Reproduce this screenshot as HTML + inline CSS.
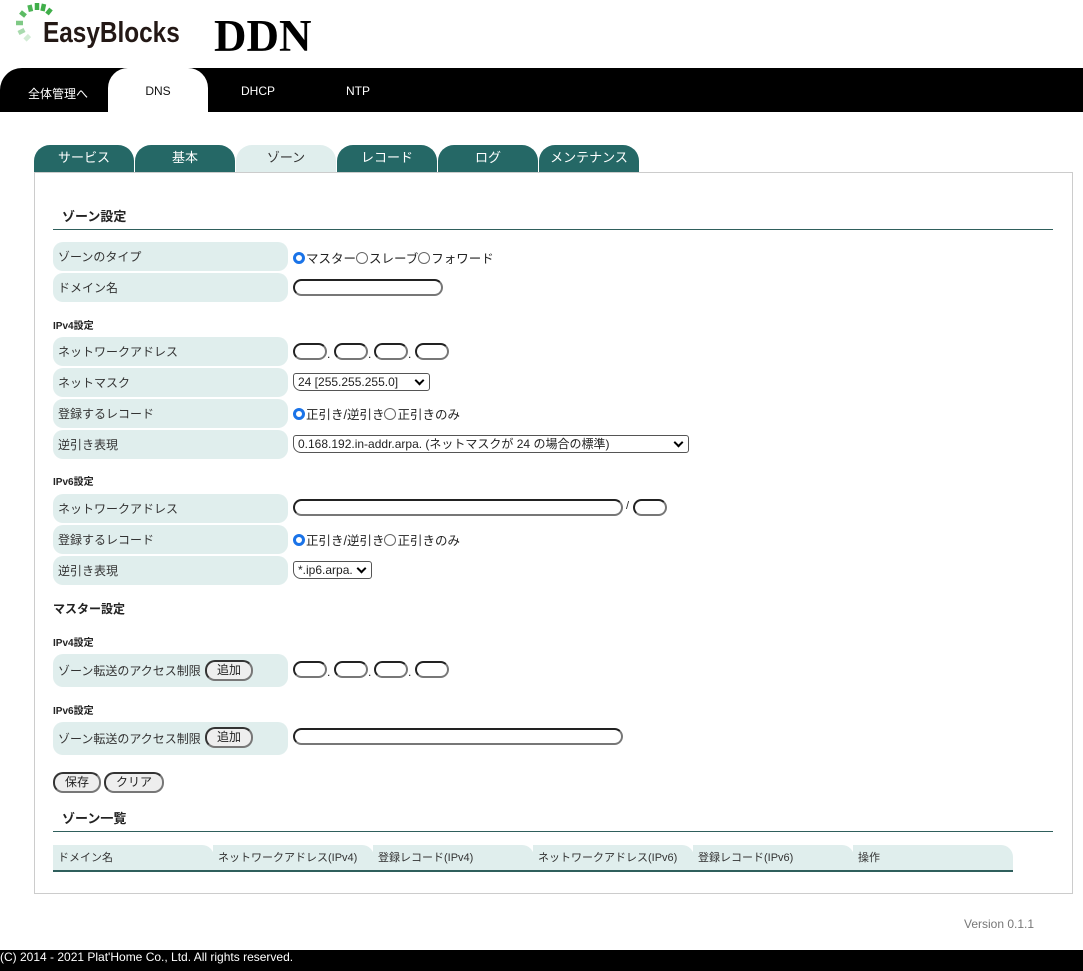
<!DOCTYPE html>
<html><head><meta charset="utf-8">
<style>
*{box-sizing:border-box;margin:0;padding:0}
body{width:1083px;height:971px;position:relative;background:#fff;font-family:"Liberation Sans","Noto Sans CJK JP",sans-serif;color:#222;overflow:hidden}
.a{position:absolute;white-space:nowrap}
.nav{position:absolute;left:0;top:68px;width:1083px;height:44px;background:#000}
.nt{position:absolute;top:84px;font-size:12px;color:#fff;text-align:center;width:100px}
.st{position:absolute;top:145px;width:100px;height:27px;background:#256866;border-radius:16px 16px 0 0;color:#fff;font-size:13px;text-align:center;line-height:25px}
.st.on{background:#e0eeed;color:#333}
.box{position:absolute;left:34px;top:172px;width:1039px;height:722px;border:1px solid #ccc}
.h{font-size:13px;font-weight:bold;color:#222}
.line{position:absolute;left:53px;width:1000px;height:1px;background:#2f5f5c}
.lb{position:absolute;left:53px;width:235px;background:#e0eeed;border-radius:10px;font-size:12px;color:#333;padding-left:5px;display:flex;align-items:center}
.sm{font-size:10px;font-weight:bold}
.in{position:absolute;height:17px;border:2px solid #222;border-right-color:#777;border-bottom-color:#777;border-radius:9px;background:#fff}
.sel{position:absolute;height:18px;border:1px solid #555;border-radius:3px 3px 3px 8px;font-size:12px;line-height:16px;padding-left:4px;background:#fff}
.sel:after{content:"";position:absolute;right:6px;top:3px;width:5px;height:5px;border-right:2px solid #000;border-bottom:2px solid #000;transform:rotate(45deg)}
.r{font-size:12.5px;color:#222;display:flex;align-items:center}
.rd{display:inline-block;width:12px;height:12px;border-radius:50%;border:1px solid #666;margin-right:1px}
.rd.on{border:3.5px solid #1a73e8;background:#fff}
.btn{position:absolute;height:21px;border:2px solid #333;border-right-color:#777;border-bottom-color:#777;border-radius:10px;background:#eee;font-size:12px;text-align:center;line-height:17px}
.th{position:absolute;top:845px;height:26px;width:161px;background:#e0eeed;border-radius:0 12px 0 0;font-size:11px;color:#333;line-height:26px;padding-left:5px}
.dot{position:absolute;font-size:12px}
</style></head><body>
<svg class="a" style="left:0;top:0" width="60" height="50" viewBox="0 0 60 50">
<g stroke-width="4.5" stroke-linecap="butt">
<line x1="37" y1="3" x2="37" y2="10" stroke="#3fae49"/>
<line x1="44" y1="4" x2="42.5" y2="11" stroke="#3fae49"/>
<line x1="51" y1="9" x2="47" y2="14" stroke="#3fae49"/>
<line x1="29.5" y1="5" x2="31" y2="11.5" stroke="#4cb556"/>
<line x1="20.5" y1="12" x2="25.5" y2="16" stroke="#5cbb64"/>
<line x1="16" y1="23" x2="23" y2="23" stroke="#7fc985"/>
<line x1="18.5" y1="33" x2="24.5" y2="30" stroke="#a9daae"/>
<line x1="25" y1="40" x2="29.5" y2="35.5" stroke="#d3ecd5"/>
</g></svg>
<div class="a" style="left:43px;top:17px;font-size:29px;font-weight:bold;color:#231815;transform:scaleX(0.84);transform-origin:left">EasyBlocks</div>
<div class="a" style="left:214px;top:10px;font-size:45px;font-weight:bold;font-family:'Liberation Serif',serif;color:#000">DDN</div>

<div class="nav"></div>
<div class="a" style="left:0;top:68px;width:40px;height:44px;background:#fff"></div>
<div class="a" style="left:0;top:68px;width:108px;height:44px;background:#000;border-radius:22px 0 0 0"></div>
<div class="a" style="left:108px;top:68px;width:100px;height:44px;background:#fff;border-radius:20px 20px 0 0"></div>
<div class="nt" style="left:8px;top:85px">全体管理へ</div>
<div class="nt" style="left:108px;color:#111">DNS</div>
<div class="nt" style="left:208px">DHCP</div>
<div class="nt" style="left:308px">NTP</div>

<div class="st" style="left:34px">サービス</div>
<div class="st" style="left:135px">基本</div>
<div class="st on" style="left:236px">ゾーン</div>
<div class="st" style="left:337px">レコード</div>
<div class="st" style="left:438px">ログ</div>
<div class="st" style="left:539px">メンテナンス</div>

<div class="box"></div>
<div class="a h" style="left:62px;top:206px">ゾーン設定</div>
<div class="line" style="top:229px"></div>

<div class="lb" style="top:242px;height:29px">ゾーンのタイプ</div>
<div class="a r" style="left:293px;top:248px"><span class="rd on"></span>マスター<span class="rd"></span>スレーブ <span class="rd"></span>フォワード</div>
<div class="lb" style="top:273px;height:29px">ドメイン名</div>
<div class="in" style="left:293px;top:279px;width:150px"></div>

<div class="a sm" style="left:53px;top:317px">IPv4設定</div>
<div class="lb" style="top:337px;height:29px">ネットワークアドレス</div>
<div class="in" style="left:293px;top:343px;width:34px"></div><div class="dot" style="left:327px;top:347px">.</div>
<div class="in" style="left:334px;top:343px;width:34px"></div><div class="dot" style="left:368px;top:347px">.</div>
<div class="in" style="left:374px;top:343px;width:34px"></div><div class="dot" style="left:408px;top:347px">.</div>
<div class="in" style="left:415px;top:343px;width:34px"></div>
<div class="lb" style="top:368px;height:29px">ネットマスク</div>
<div class="sel" style="left:293px;top:373px;width:137px">24 [255.255.255.0]</div>
<div class="lb" style="top:399px;height:29px">登録するレコード</div>
<div class="a r" style="left:293px;top:404px"><span class="rd on"></span>正引き/逆引き <span class="rd"></span>正引きのみ</div>
<div class="lb" style="top:430px;height:29px">逆引き表現</div>
<div class="sel" style="left:293px;top:435px;width:396px">0.168.192.in-addr.arpa. (ネットマスクが 24 の場合の標準)</div>

<div class="a sm" style="left:53px;top:473px">IPv6設定</div>
<div class="lb" style="top:494px;height:29px">ネットワークアドレス</div>
<div class="in" style="left:293px;top:499px;width:330px"></div>
<div class="dot" style="left:626px;top:500px;font-size:11px">/</div>
<div class="in" style="left:633px;top:499px;width:34px"></div>
<div class="lb" style="top:525px;height:29px">登録するレコード</div>
<div class="a r" style="left:293px;top:530px"><span class="rd on"></span>正引き/逆引き <span class="rd"></span>正引きのみ</div>
<div class="lb" style="top:556px;height:29px">逆引き表現</div>
<div class="sel" style="left:293px;top:561px;width:79px">*.ip6.arpa.</div>

<div class="a" style="left:53px;top:600px;font-size:12px;font-weight:bold">マスター設定</div>
<div class="a sm" style="left:53px;top:634px">IPv4設定</div>
<div class="lb" style="top:654px;height:33px">ゾーン転送のアクセス制限</div>
<div class="btn" style="left:205px;top:660px;width:48px">追加</div>
<div class="in" style="left:293px;top:661px;width:34px"></div><div class="dot" style="left:327px;top:665px">.</div>
<div class="in" style="left:334px;top:661px;width:34px"></div><div class="dot" style="left:368px;top:665px">.</div>
<div class="in" style="left:374px;top:661px;width:34px"></div><div class="dot" style="left:408px;top:665px">.</div>
<div class="in" style="left:415px;top:661px;width:34px"></div>

<div class="a sm" style="left:53px;top:702px">IPv6設定</div>
<div class="lb" style="top:722px;height:33px">ゾーン転送のアクセス制限</div>
<div class="btn" style="left:205px;top:727px;width:48px">追加</div>
<div class="in" style="left:293px;top:728px;width:330px"></div>

<div class="btn" style="left:53px;top:772px;width:48px">保存</div>
<div class="btn" style="left:104px;top:772px;width:60px">クリア</div>

<div class="a h" style="left:62px;top:808px">ゾーン一覧</div>
<div class="line" style="top:831px"></div>
<div class="th" style="left:53px">ドメイン名</div>
<div class="th" style="left:213px">ネットワークアドレス(IPv4)</div>
<div class="th" style="left:373px">登録レコード(IPv4)</div>
<div class="th" style="left:533px">ネットワークアドレス(IPv6)</div>
<div class="th" style="left:693px">登録レコード(IPv6)</div>
<div class="th" style="left:853px;width:160px">操作</div>
<div class="a" style="left:53px;top:870px;width:960px;height:2px;background:#2f5f5c"></div>

<div class="a" style="left:964px;top:917px;font-size:12px;color:#777">Version 0.1.1</div>
<div class="a" style="left:0;top:950px;width:1083px;height:21px;background:#000"></div>
<div class="a" style="left:0;top:950px;font-size:12px;color:#fff">(C) 2014 - 2021 Plat'Home Co., Ltd. All rights reserved.</div>
</body></html>
